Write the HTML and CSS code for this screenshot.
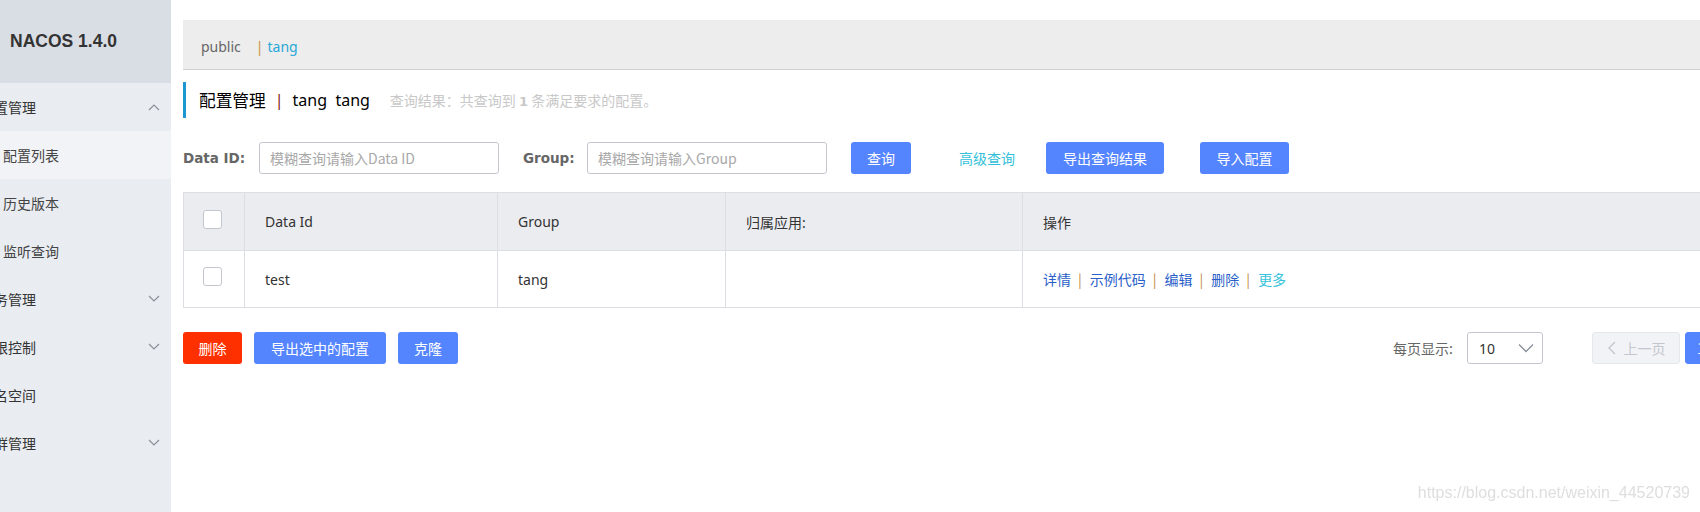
FILE: index.html
```html
<!DOCTYPE html>
<html lang="zh-CN">
<head>
<meta charset="utf-8">
<title>Nacos 配置管理</title>
<link rel="stylesheet" href="styles.css">
</head>
<body>
<div class="app">
  <aside class="sidebar">
    <div class="brand">NACOS 1.4.0</div>
    <nav class="menu">
      <div class="menu-item top"><span class="label">配置管理</span>
        <svg class="chev" width="12" height="8" viewBox="0 0 12 8"><polyline points="1,7 6,2 11,7" fill="none" stroke="#8a8f99" stroke-width="1.2"/></svg>
      </div>
      <div class="menu-item sub active"><span class="label">配置列表</span></div>
      <div class="menu-item sub"><span class="label">历史版本</span></div>
      <div class="menu-item sub"><span class="label">监听查询</span></div>
      <div class="menu-item top"><span class="label">服务管理</span>
        <svg class="chev" width="12" height="8" viewBox="0 0 12 8"><polyline points="1,1 6,6 11,1" fill="none" stroke="#8a8f99" stroke-width="1.2"/></svg>
      </div>
      <div class="menu-item top"><span class="label">权限控制</span>
        <svg class="chev" width="12" height="8" viewBox="0 0 12 8"><polyline points="1,1 6,6 11,1" fill="none" stroke="#8a8f99" stroke-width="1.2"/></svg>
      </div>
      <div class="menu-item top"><span class="label">命名空间</span></div>
      <div class="menu-item top"><span class="label">集群管理</span>
        <svg class="chev" width="12" height="8" viewBox="0 0 12 8"><polyline points="1,1 6,6 11,1" fill="none" stroke="#8a8f99" stroke-width="1.2"/></svg>
      </div>
    </nav>
  </aside>

  <main class="main">
    <div class="ns-bar">
      <span class="ns">public</span>
      <span class="ns-sep">|</span>
      <span class="ns ns-active">tang</span>
    </div>

    <div class="page-title">
      <span class="title-main">配置管理</span>
      <span class="title-sep">|</span>
      <span class="title-ns">tang&nbsp;&nbsp;tang</span>
      <span class="title-info">查询结果：共查询到 <b>1</b> 条满足要求的配置。</span>
    </div>

    <div class="search-row">
      <label class="field-label">Data ID:</label>
      <div class="input"><span class="placeholder">模糊查询请输入Data ID</span></div>
      <label class="field-label group-label">Group:</label>
      <div class="input"><span class="placeholder">模糊查询请输入Group</span></div>
      <button class="btn primary btn-query">查询</button>
      <span class="text-link adv">高级查询</span>
      <button class="btn primary btn-export">导出查询结果</button>
      <button class="btn primary btn-import">导入配置</button>
    </div>

    <div class="table">
      <div class="trow thead">
        <div class="cell check"><span class="checkbox"></span></div>
        <div class="cell">Data Id</div>
        <div class="cell">Group</div>
        <div class="cell">归属应用:</div>
        <div class="cell">操作</div>
      </div>
      <div class="trow tbody">
        <div class="cell check"><span class="checkbox"></span></div>
        <div class="cell">test</div>
        <div class="cell">tang</div>
        <div class="cell"></div>
        <div class="cell ops">
          <span class="op">详情</span><span class="op-sep">|</span><span class="op">示例代码</span><span class="op-sep">|</span><span class="op">编辑</span><span class="op-sep">|</span><span class="op">删除</span><span class="op-sep">|</span><span class="op more">更多</span>
        </div>
      </div>
    </div>

    <div class="footer-row">
      <div class="bulk">
        <button class="btn danger">删除</button>
        <button class="btn primary btn-export-sel">导出选中的配置</button>
        <button class="btn primary">克隆</button>
      </div>
      <div class="pager">
        <span class="pager-label">每页显示:</span>
        <div class="select"><span>10</span>
          <svg width="16" height="10" viewBox="0 0 16 10"><polyline points="1,1.5 8,8.5 15,1.5" fill="none" stroke="#8a8f99" stroke-width="1.3"/></svg>
        </div>
        <button class="page-btn prev" disabled>
          <svg width="10" height="14" viewBox="0 0 10 14"><polyline points="8,1 2,7 8,13" fill="none" stroke="#c4c6cf" stroke-width="1.4"/></svg>
          上一页
        </button>
        <button class="page-btn current">1</button>
        <button class="page-btn next">下一页</button>
      </div>
    </div>
  </main>
</div>
<div class="watermark">https://blog.csdn.net/weixin_44520739</div>
</body>
</html>
```

FILE: styles.css
```css
html, body {
  margin: 0;
  padding: 0;
  overflow: hidden;
  background: #fff;
}
body {
  font-family: "Noto Sans", "Noto Sans CJK SC", sans-serif;
  font-size: 14px;
  color: #333;
}
.app {
  display: flex;
  width: 1810px;
  height: 512px;
}

/* Sidebar */
.sidebar {
  width: 171px;
  flex: none;
  background: #e9ecf1;
  overflow: hidden;
}
.brand {
  height: 83px;
  background: #d9dde4;
  display: flex;
  align-items: center;
  padding-left: 10px;
  font-family: "Liberation Sans", Arial, sans-serif;
  font-weight: bold;
  font-size: 17.5px;
  color: #333;
  box-sizing: border-box;
}
.menu-item {
  height: 48px;
  display: flex;
  align-items: center;
  justify-content: space-between;
  padding-right: 11px;
  font-family: "Noto Sans CJK SC", sans-serif;
  font-size: 14px;
  color: #333;
  white-space: nowrap;
}
.menu-item.top .label {
  margin-left: -20px;
}
.menu-item.sub .label {
  margin-left: 3px;
  color: #444;
}
.menu-item.active {
  background: #f2f3f7;
}
.chev {
  flex: none;
}

/* Main */
.main {
  width: 1627px;
  flex: none;
  margin-left: 12px;
  display: flex;
  flex-direction: column;
}
.ns-bar {
  margin-top: 20px;
  height: 50px;
  background: #ededed;
  border-bottom: 1px solid #d0d0d0;
  display: flex;
  align-items: center;
  padding: 3px 0 0 18px;
  box-sizing: border-box;
}
.ns {
  color: #666;
}
.ns-sep {
  color: #c9913f;
  margin: 0 4px 0 15px;
}
.ns-active {
  color: #2aa8d8;
}

.page-title {
  margin-top: 12px;
  height: 36px;
  border-left: 3px solid #1a98cf;
  padding-left: 13px;
  display: flex;
  align-items: center;
  white-space: nowrap;
}
.title-main {
  font-family: "Noto Sans CJK SC", sans-serif;
  font-size: 16.7px;
  color: #000;
}
.title-sep {
  color: #7d1414;
  font-size: 16px;
  margin: 0 9px 0 9px;
}
.title-ns {
  font-size: 16px;
  color: #000;
}
.title-info {
  margin-left: 20px;
  font-family: "Noto Sans CJK SC", sans-serif;
  font-size: 14px;
  color: #c8c8c8;
}
.title-info b {
  font-family: "DejaVu Sans", sans-serif;
  font-weight: bold;
  font-size: 13px;
}

.search-row {
  margin-top: 24px;
  height: 32px;
  display: flex;
  align-items: center;
  white-space: nowrap;
}
.field-label {
  font-family: "DejaVu Sans", sans-serif;
  font-weight: bold;
  font-size: 13.5px;
  color: #666;
  width: 76px;
  flex: none;
}
.group-label {
  margin-left: 24px;
  width: 64px;
}
.input {
  width: 240px;
  height: 32px;
  box-sizing: border-box;
  border: 1px solid #c4c6cf;
  border-radius: 3px;
  display: flex;
  align-items: center;
  padding-left: 10px;
  background: #fff;
}
.placeholder {
  color: #a8a8a8;
  font-family: "Noto Sans CJK SC", sans-serif;
  font-size: 14px;
}
.btn {
  height: 32px;
  border: none;
  border-radius: 3px;
  padding: 0 16px;
  font-family: "Noto Sans CJK SC", sans-serif;
  font-size: 14px;
  color: #fff;
  cursor: pointer;
  white-space: nowrap;
}
.btn.primary {
  background: #5584ff;
}
.btn.danger {
  background: #ff3000;
}
.btn-query {
  margin-left: 24px;
}
.text-link {
  font-family: "Noto Sans CJK SC", sans-serif;
  color: #33bfd9;
}
.adv {
  margin-left: 48px;
}
.btn-export {
  margin-left: 31px;
  padding: 0 17px;
}
.btn-import {
  margin-left: 36px;
  padding: 0 16.5px;
}

/* Table */
.table {
  margin-top: 18px;
  border-left: 1px solid #dcdee3;
  border-right: 1px solid #dcdee3;
}
.trow {
  display: grid;
  grid-template-columns: 61px 253px 228px 297px 1fr;
  border-bottom: 1px solid #dcdee3;
  box-sizing: border-box;
}
.thead {
  background: #ebecf0;
  border-top: 1px solid #dcdee3;
  height: 59px;
}
.tbody {
  height: 57px;
}
.cell {
  box-sizing: border-box;
  border-right: 1px solid #dcdee3;
  padding-left: 20px;
  display: flex;
  align-items: center;
  color: #333;
  white-space: nowrap;
}
.cell:last-child {
  border-right: none;
}
.cell.check {
  padding-left: 0;
  justify-content: center;
}
.checkbox {
  width: 19px;
  height: 19px;
  box-sizing: border-box;
  border: 1px solid #c4c6cf;
  border-radius: 3px;
  background: #fff;
  margin-top: -5px;
  margin-right: 3px;
}
.ops {
  font-family: "Noto Sans CJK SC", sans-serif;
}
.op {
  color: #2a5fc9;
}
.op.more {
  color: #38c3dc;
}
.op-sep {
  color: #c08a44;
  margin: 0 8px 0 7px;
}

/* Footer */
.footer-row {
  margin-top: 24px;
  display: flex;
  align-items: center;
  justify-content: space-between;
}
.bulk {
  display: flex;
  gap: 12px;
}
.btn.danger {
  padding: 0 15.5px;
}
.btn-export-sel {
  padding: 0 17px;
}
.pager {
  display: flex;
  align-items: center;
}
.pager-label {
  font-family: "Noto Sans CJK SC", sans-serif;
  color: #666;
}
.select {
  margin-left: 14px;
  width: 76px;
  height: 32px;
  box-sizing: border-box;
  border: 1px solid #c4c6cf;
  border-radius: 3px;
  display: flex;
  align-items: center;
  justify-content: space-between;
  padding: 0 8px 0 11px;
  color: #333;
}
.page-btn {
  height: 32px;
  border-radius: 3px;
  font-family: "Noto Sans CJK SC", sans-serif;
  font-size: 14px;
  box-sizing: border-box;
  display: flex;
  align-items: center;
  justify-content: center;
  gap: 7px;
}
.prev {
  margin-left: 49px;
  width: 88px;
  background: #f2f3f7;
  border: 1px solid #e6e7eb;
  color: #c4c6cf;
}
.current {
  margin-left: 5px;
  width: 32px;
  background: #5584ff;
  border: 1px solid #5584ff;
  color: #fff;
}
.next {
  margin-left: 5px;
  width: 88px;
  background: #fff;
  border: 1px solid #c4c6cf;
  color: #333;
}

.watermark {
  position: fixed;
  right: 10px;
  bottom: 10px;
  font-family: "Liberation Sans", Arial, sans-serif;
  font-size: 16px;
  line-height: 18px;
  color: #dedede;
}
```
